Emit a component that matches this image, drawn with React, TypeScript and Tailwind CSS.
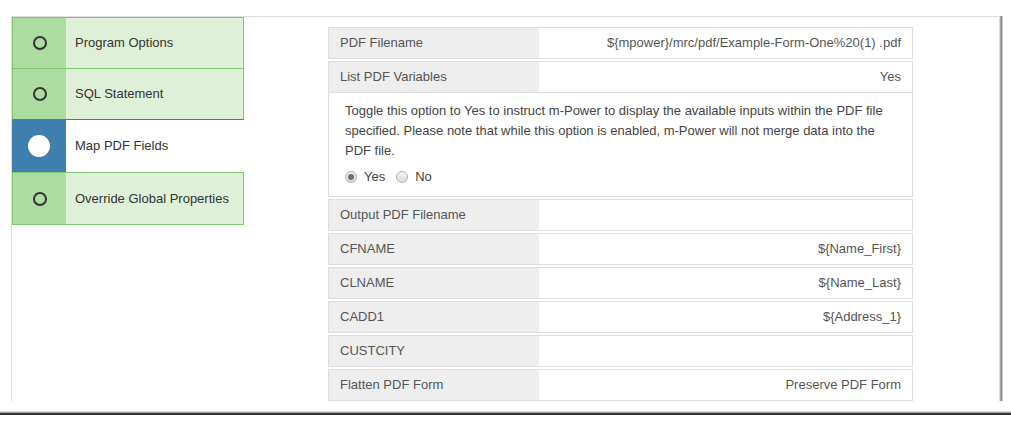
import React from 'react';

type Step = { label: string; active?: boolean };

const steps: Step[] = [
  { label: 'Program Options' },
  { label: 'SQL Statement' },
  { label: 'Map PDF Fields', active: true },
  { label: 'Override Global Properties' },
];

const rows: { label: string; value: string }[] = [
  { label: 'Output PDF Filename', value: '' },
  { label: 'CFNAME', value: '${Name_First}' },
  { label: 'CLNAME', value: '${Name_Last}' },
  { label: 'CADD1', value: '${Address_1}' },
  { label: 'CUSTCITY', value: '' },
  { label: 'Flatten PDF Form', value: 'Preserve PDF Form' },
];

const Row = ({ label, value }: { label: string; value: string }) => (
  <div className="flex h-[32px] border border-[#dddddd] mb-[2px]">
    <div className="w-[210px] bg-[#eeeeee] pl-[11px] flex items-center text-[#555]">{label}</div>
    <div className="flex-1 flex items-center justify-end pr-[11px] text-[#555]">{value}</div>
  </div>
);

const Radio = ({ checked }: { checked?: boolean }) => (
  <span className="w-[12px] h-[12px] rounded-full border border-[#b0b0b0] bg-gradient-to-b from-[#f4f4f4] to-[#d8d8d8] flex items-center justify-center">
    {checked && <span className="w-[6px] h-[6px] rounded-full bg-[#6f6f6f]" />}
  </span>
);

const StepItem = ({ step, index }: { step: Step; index: number }) => {
  if (step.active) {
    return (
      <div className="flex h-[52px] bg-white">
        <div className="w-[54px] bg-[#3f7fad] flex items-center justify-center">
          <span className="w-[22px] h-[22px] rounded-full bg-white" />
        </div>
        <div className="flex-1 flex items-center pl-[9px] text-[#333]">{step.label}</div>
      </div>
    );
  }
  // borders differ a little per position in the list
  const border =
    index === 0
      ? 'border border-[#80c76f] h-[52px]'
      : index === 1
      ? 'border-x border-b border-x-[#80c76f] border-b-[#3f7fad] h-[51px]'
      : 'border border-[#80c76f] h-[53px]';
  return (
    <div className={`flex bg-[#dff0d8] ${border}`}>
      <div className="w-[53px] bg-[#acdc9f] flex items-center justify-center">
        <span className="w-[14px] h-[14px] rounded-full border-2 border-[#333]" />
      </div>
      <div className="flex-1 flex items-center pl-[9px] text-[#333]">{step.label}</div>
    </div>
  );
};

const App = () => {
  return (
    <div className="w-[1011px] h-[423px] bg-white overflow-hidden font-['Liberation_Sans',Arial,sans-serif] text-[13px]">
      <div className="pt-[16px] pl-[11px]">
        <div className="w-[989px] h-[385px] border-l border-t border-r border-[#dddddd] shadow-[1px_0_0_#a4a4a4,2px_0_0_#888,3px_0_0_#cccccc] flex">
          {/* Steps */}
          <div className="w-[232px]">
            {steps.map((s, i) => (
              <StepItem key={s.label} step={s} index={i} />
            ))}
          </div>

          {/* Properties */}
          <div className="w-[585px] ml-[84px] mt-[10px]">
            <Row label="PDF Filename" value="${mpower}/mrc/pdf/Example-Form-One%20(1) .pdf" />
            <div className="mb-[2px]">
              <div className="flex h-[32px] border border-[#dddddd]">
                <div className="w-[210px] bg-[#eeeeee] pl-[11px] flex items-center text-[#555]">List PDF Variables</div>
                <div className="flex-1 flex items-center justify-end pr-[11px] text-[#555]">Yes</div>
              </div>
              <div className="h-[104px] border-x border-b border-[#dddddd] pl-[16px] pr-[16px] pt-[8px] text-[#444] leading-[20px]">
                <p>
                  Toggle this option to Yes to instruct m-Power to display the available inputs within the PDF file
                  specified. Please note that while this option is enabled, m-Power will not merge data into the
                  PDF file.
                </p>
                <div className="flex items-center h-[20px] mt-[6px]">
                  <Radio checked />
                  <span className="ml-[7px] mr-[11px]">Yes</span>
                  <Radio />
                  <span className="ml-[7px]">No</span>
                </div>
              </div>
            </div>
            {rows.map((r) => (
              <Row key={r.label} label={r.label} value={r.value} />
            ))}
          </div>
        </div>
      </div>

      {/* bottom edge */}
      <div className="mt-[10px]">
        <div className="h-[1px] bg-[#d4d4d4]" />
        <div className="h-[1px] bg-[#a8a8a8]" />
        <div className="h-[2px] bg-[#333]" />
      </div>
    </div>
  );
};

export default App;
